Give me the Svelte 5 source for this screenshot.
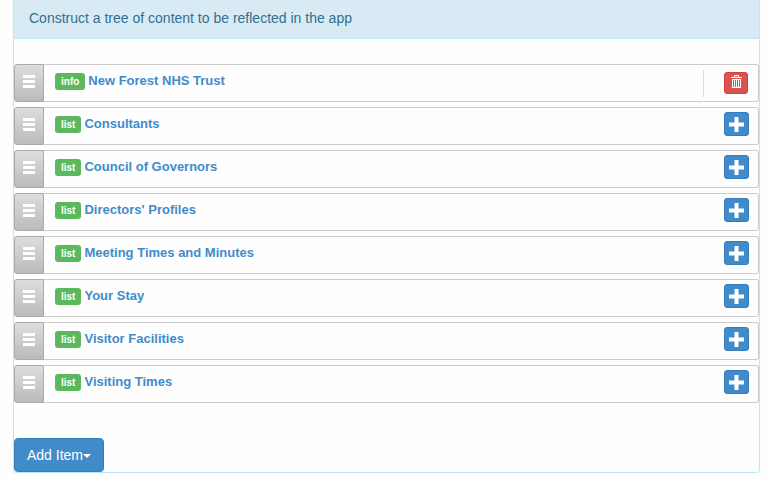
<script>
  const items = [
    { type: 'info', title: 'New Forest NHS Trust', root: true },
    { type: 'list', title: 'Consultants' },
    { type: 'list', title: 'Council of Governors' },
    { type: 'list', title: "Directors' Profiles" },
    { type: 'list', title: 'Meeting Times and Minutes' },
    { type: 'list', title: 'Your Stay' },
    { type: 'list', title: 'Visitor Facilities' },
    { type: 'list', title: 'Visiting Times' }
  ];
</script>

<section class="panel">
  <header>Construct a tree of content to be reflected in the app</header>
  <ol>
    {#each items as item}
      <li>
        <button class="handle" type="button" aria-label="Move {item.title}">
          <svg width="12" height="13" viewBox="0 0 12 13" fill="#fff" aria-hidden="true">
            <path d="M0 0h12v3H0zM0 5h12v3H0zM0 10h12v3H0z" />
          </svg>
        </button>
        <div class="content">
          <div class="name">
            <span class="tag">{item.type}</span>
            <a href="#edit">{item.title}</a>
          </div>
          {#if item.root}
            <div class="tools">
              <button class="remove" type="button" aria-label="Delete {item.title}">
                <svg width="11" height="14" viewBox="0 0 11 14" fill="none" stroke="#fff" aria-hidden="true">
                  <path d="M3.5 2.500v-2h4v2M0 2.500h11M1 4.500h9M1 12.500h9M1.500 4v9M3.500 4v9M5.500 4v9M7.500 4v9M9.500 4v9" />
                </svg>
              </button>
            </div>
          {:else}
            <button class="add" type="button" aria-label="Add to {item.title}">
              <svg width="15" height="15" viewBox="0 0 15 15" fill="#fff" aria-hidden="true">
                <path d="M5.500 0h4v5.500H15v4H9.500V15h-4V9.500H0v-4h5.500z" />
              </svg>
            </button>
          {/if}
        </div>
      </li>
    {/each}
  </ol>
  <button class="new" type="button">Add Item<span class="caret"></span></button>
</section>

<style>
  :global(body) {
    background: #fefefe;
    font-family: "Liberation Sans", Arial, sans-serif;
  }
  .panel {
    margin: 0 11px 0 13px;
    border: 1px solid #bce8f1;
    border-top: 0;
    border-radius: 0 0 4px 4px;
    box-shadow: 0 1px 1px rgba(0, 0, 0, 0.05);
    font-size: 14px;
    line-height: 20px;
  }
  header {
    padding: 8px 15px 10px;
    background: #d8ebf5;
    border-bottom: 1px solid #bce8f1;
    color: #31708f;
  }
  ol {
    display: flex;
    flex-direction: column;
    gap: 5px;
    margin: 0;
    padding: 25px 0 35px;
    list-style: none;
  }
  li {
    display: flex;
    height: 38px;
  }
  button {
    display: flex;
    align-items: center;
    justify-content: center;
    box-sizing: border-box;
    padding: 0;
    font: inherit;
    color: #fff;
    cursor: pointer;
  }
  .handle {
    width: 30px;
    padding-bottom: 3px;
    border: 1px solid #aaa;
    border-radius: 3px 0 0 3px;
    background: linear-gradient(#ddd, #bbb);
  }
  .content {
    flex: 1;
    display: flex;
    align-items: flex-start;
    justify-content: space-between;
    box-sizing: border-box;
    padding: 4px 9px 0 11px;
    border: 1px solid #ccc;
    border-left: 0;
    border-radius: 0 3px 3px 0;
  }
  .name {
    display: flex;
    align-items: center;
    gap: 3px;
    padding-top: 2px;
    font-size: 13px;
    font-weight: bold;
  }
  .tag {
    margin-top: 1px;
    padding: 0 6px;
    border-radius: 3px;
    background: #5cb85c;
    color: #fff;
    font-size: 10px;
    line-height: 17px;
  }
  a {
    color: #428bca;
    text-decoration: none;
  }
  .tools {
    display: flex;
    align-items: flex-start;
    box-sizing: border-box;
    height: 27px;
    margin: 1px 1px 0 0;
    padding: 2px 0 0 20px;
    border-left: 1px solid #ddd;
  }
  .remove {
    width: 24px;
    height: 22px;
    padding: 0 0 2px 1px;
    border: 1px solid #d43f3a;
    border-radius: 3px;
    background: #d9534f;
  }
  .add {
    width: 25px;
    height: 24px;
    padding-top: 1px;
    border: 1px solid #357ebd;
    border-radius: 3px;
    background: #428bca;
  }
  .new {
    height: 34px;
    padding: 0 12px;
    border: 1px solid #357ebd;
    border-radius: 4px;
    background: #428bca;
  }
  .caret {
    margin-top: 2px;
    border: 4px solid transparent;
    border-top-color: #fff;
    border-bottom: 0;
  }
</style>
